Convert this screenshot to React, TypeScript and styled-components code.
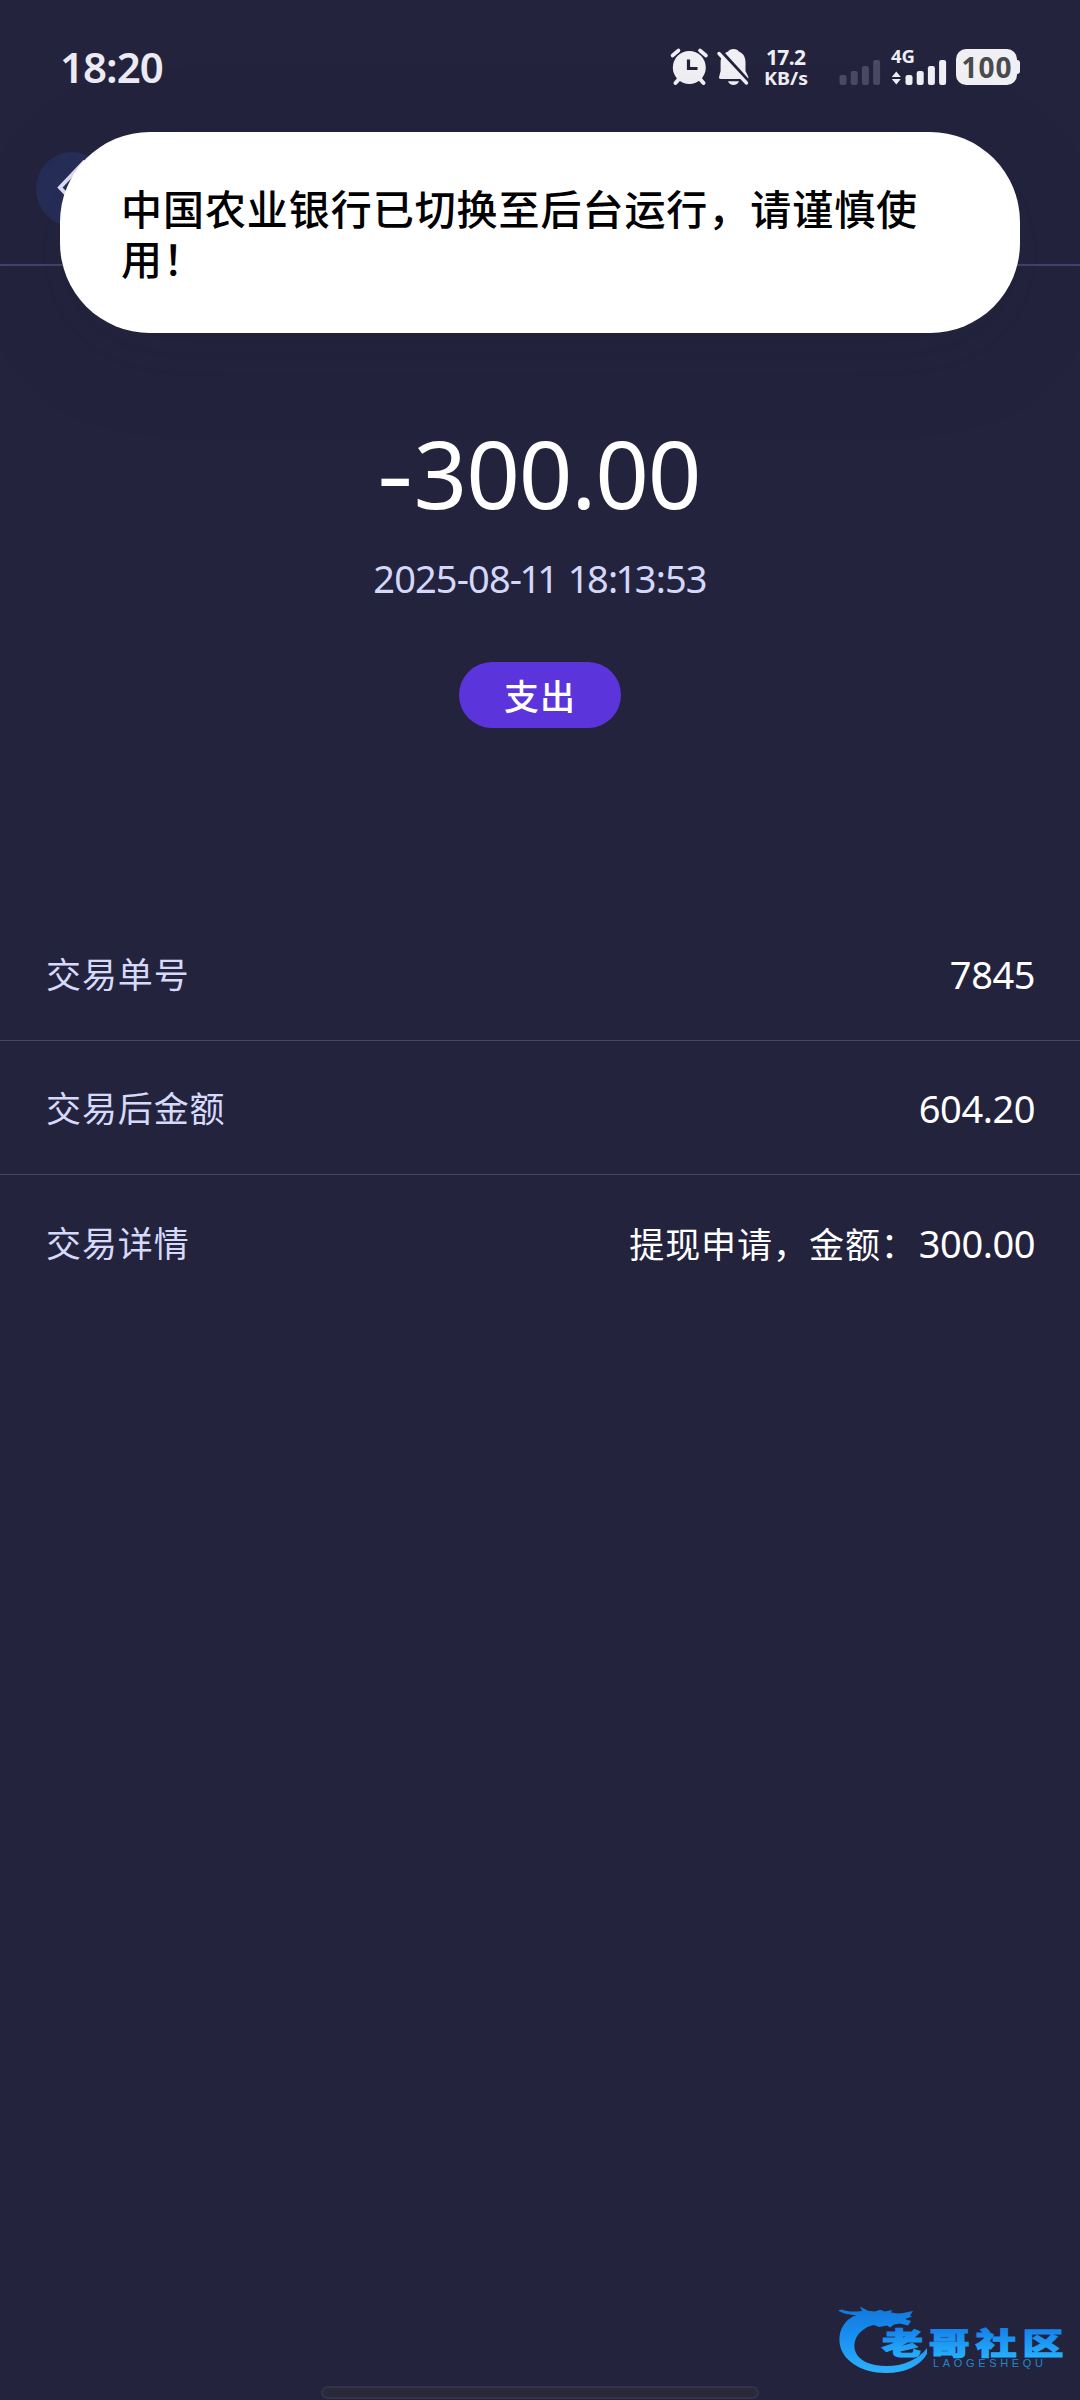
import React from 'react';
import styled, { createGlobalStyle } from 'styled-components';

const Global = createGlobalStyle`
  * { box-sizing: border-box; }
  body {
    margin: 0;
    background: #24233e;
    font-family: 'Noto Sans', 'Noto Sans CJK SC', sans-serif;
  }
`;

const Screen = styled.main`
  position: relative;
  width: 1080px;
  height: 2400px;
  overflow: hidden;
  display: flex;
  flex-direction: column;
  background: #24233e;
  color: #fff;
`;

const StatusBar = styled.header`
  height: 132px;
  padding: 0 60px;
  display: flex;
  align-items: center;
  justify-content: space-between;
`;

const Clock = styled.time`
  padding-top: 2px;
  font-size: 42px;
  line-height: 60px;
  font-weight: 600;
  letter-spacing: -1px;
  color: #ecebf4;
`;

const StatusIcons = styled.svg`
  display: block;
  width: 352px;
  height: 60px;
`;

const NavBar = styled.nav`
  height: 134px;
  padding: 20px 36px;
  border-bottom: 2px solid #45436a;
`;

const BackButton = styled.div`
  width: 72px;
  height: 74px;
  border-radius: 50%;
  background: #262e58;
  display: flex;
  align-items: center;
  justify-content: center;
`;

const Toast = styled.div`
  position: absolute;
  top: 132px;
  left: 60px;
  width: 960px;
  height: 201px;
  padding: 51px 58px 0 61px;
  border-radius: 90px;
  background: #fff;
  color: #000;
  font-family: 'Noto Sans CJK SC', sans-serif;
  font-size: 41px;
  line-height: 49.5px;
  font-weight: 500;
  letter-spacing: 0.95px;
  box-shadow: 0 20px 90px rgba(32, 32, 48, 0.2);
`;

const Summary = styled.section`
  height: 640px;
  padding-top: 143px;
  display: flex;
  flex-direction: column;
  align-items: center;
`;

const Amount = styled.div`
  font-size: 94px;
  line-height: 128px;
  letter-spacing: -1.2px;
`;

const Minus = styled.span`
  display: inline-block;
  margin-right: 5px;
  transform: scaleX(1.2) translateY(-2px);
`;

const Timestamp = styled.div`
  margin-top: 11px;
  font-size: 38px;
  line-height: 60px;
  letter-spacing: -0.9px;
  word-spacing: 4px;
  color: #d3d8fb;
`;

const NarrowDigit = styled.span`
  margin: 0 -1.6px;
`;

const Badge = styled.div`
  margin-top: 54px;
  width: 162px;
  height: 66px;
  padding-bottom: 1px;
  border-radius: 33px;
  background: #5b34dc;
  display: flex;
  align-items: center;
  justify-content: center;
  font-family: 'Noto Sans CJK SC', sans-serif;
  font-size: 35px;
  font-weight: 500;
  letter-spacing: 1px;
`;

const Details = styled.dl`
  margin: 0;
`;

const Row = styled.div<{ $last?: boolean }>`
  height: 134.5px;
  padding: 0 46px;
  display: flex;
  align-items: center;
  justify-content: space-between;
  border-bottom: 1px solid ${(p) => (p.$last ? 'transparent' : '#464765')};
`;

const Label = styled.dt`
  font-family: 'Noto Sans CJK SC', sans-serif;
  font-size: 35px;
  letter-spacing: 0.9px;
  line-height: 60px;
  color: #d5d9fa;
`;

const Value = styled.dd`
  margin: 0 -1px 0 0;
  padding-top: 2px;
  font-size: 38px;
  line-height: 60px;
  letter-spacing: -0.45px;
  color: #fff;
`;

const Note = styled.span`
  margin-right: 2px;
  font-family: 'Noto Sans CJK SC', sans-serif;
  font-size: 35px;
  letter-spacing: 0.95px;
`;

const Footer = styled.footer`
  margin-top: auto;
  display: flex;
  flex-direction: column;
`;

const Brand = styled.svg`
  align-self: flex-end;
  display: block;
  width: 260px;
  height: 100px;
`;

const HomeIndicator = styled.div`
  align-self: center;
  margin: 6px 0 1px;
  width: 438px;
  height: 13px;
  border: 2px solid #34324a;
  border-radius: 7px;
  background: #2a2939;
`;

const rows: { label: string; note?: string; value: string }[] = [
  { label: '交易单号', value: '7845' },
  { label: '交易后金额', value: '604.20' },
  { label: '交易详情', note: '提现申请，金额：', value: '300.00' },
];

const Digits = ({ text }: { text: string }) => (
  <>
    {text.split('').map((c, i) => (c === '1' ? <NarrowDigit key={i}>1</NarrowDigit> : c))}
  </>
);

const Bars = ({ x, fill }: { x: number; fill: string }) => (
  <g fill={fill}>
    {[10, 14, 19, 25].map((h, i) => (
      <rect key={h} x={x + i * 11.2} y={85 - h} width="7" height={h} rx="2.2" />
    ))}
  </g>
);

const Indicators = () => (
  <StatusIcons viewBox="668 36 352 60" fontFamily="'Noto Sans', sans-serif" fontWeight="700">
    <g fill="#efeff4" stroke="#efeff4" strokeLinecap="round">
      <circle cx="689.3" cy="67.500" r="16.5" stroke="none" />
      <path d="M672.500 55.500l6-5M706 55.500l-6-5" strokeWidth="3.6" fill="none" />
      <path d="M679 79l-3.500 4M700 79l3.500 4" strokeWidth="4" fill="none" />
      <path d="M688.500 59.500v9h9" stroke="#24233e" strokeWidth="3.2" fill="none" strokeLinecap="butt" />
    </g>
    <path
      d="M733.500 49c-2.800 0-4.600 1-5.300 2.500-5 1.700-7.600 5.500-7.600 11v8.500l-1.400 5.500c-.6 1.700.2 2.500 1.700 2.500h25.600c1.500 0 2.300-.8 1.700-2.500l-2.700-5.500v-8.500c0-5.500-2.300-9.300-6.700-11-.7-1.500-2.500-2.500-5.300-2.500z"
      fill="#efeff4"
    />
    <path d="M728 81.200h11c-1 2.600-3 3.800-5.500 3.800s-4.500-1.200-5.500-3.800z" fill="#efeff4" />
    <path d="M721.500 52l26 28.500" stroke="#24233e" strokeWidth="4" />
    <path d="M719 53.500l27.500 29.500" stroke="#efeff4" strokeWidth="3.4" strokeLinecap="round" />
    <text x="766" y="65" fontSize="21" textLength="40" fill="#efeff4">17.2</text>
    <text x="764" y="84.500" fontSize="18.500" textLength="44" lengthAdjust="spacingAndGlyphs" fill="#efeff4">KB/s</text>
    <Bars x={839.5} fill="#4b4a65" />
    <Bars x={905.5} fill="#efeff4" />
    <text x="891" y="63" fontSize="18" textLength="24" lengthAdjust="spacingAndGlyphs" fill="#efeff4">4G</text>
    <path d="M896.300 71.500l4.500 5.500h-9zM896.300 84.500l4.500-5.500h-9z" fill="#efeff4" />
    <rect x="956" y="49" width="61" height="36" rx="10" fill="#efeff4" />
    <rect x="1012" y="60" width="8" height="14" rx="3" fill="#efeff4" />
    <text x="961.500" y="77.500" fontSize="28" textLength="50" fill="#4a4a4c" fontWeight="700">100</text>
  </StatusIcons>
);

const BrandMark = () => (
  <Brand viewBox="0 0 260 100">
    <defs>
      <linearGradient id="dragon" gradientUnits="userSpaceOnUse" x1="0" y1="26" x2="0" y2="92">
        <stop offset="0" stopColor="#1476d8" />
        <stop offset="0.4" stopColor="#168cf0" />
        <stop offset="1" stopColor="#2bb0fb" />
      </linearGradient>
      <linearGradient id="name" gradientUnits="userSpaceOnUse" x1="0" y1="-27" x2="0" y2="3">
        <stop offset="0" stopColor="#1580ea" />
        <stop offset="1" stopColor="#25aefb" />
      </linearGradient>
    </defs>
    <path
      d="M22 29.500c6 2.500 12 2.300 20 1.500l-2-4.500 8 4.200 7 .8 5-1.800 5 1.800 7-1.600-1 2.600 7 1 5-.5 10-2-3 4.500 2 1-7 2.500 6 2-3 4.500-8-2-6 1-4 3-3-2-8 1.500-5-2c-8 1-17 8-19 16-3 12 5 21 20 24 20 4 42-3 52-17v6c-7 12-22 19-41 19-25 0-45-13-46.500-31-1-13 6-23 17-27-7 0-14-1.500-18.500-4.500z"
      fill="url(#dragon)"
    />
    <text
      transform="translate(62 73.500) scale(1.32 0.950)"
      fontFamily="'Noto Sans CJK SC', sans-serif"
      fontSize="31"
      fontWeight="900"
      letterSpacing="4.500"
      fill="url(#name)"
      stroke="url(#name)"
      strokeWidth="1.200"
    >
      老哥社区
    </text>
    <text
      x="113"
      y="87"
      fontFamily="'Liberation Sans', sans-serif"
      fontSize="11"
      textLength="110"
      fill="#2391d8"
      opacity="0.900"
    >
      LAOGESHEQU
    </text>
  </Brand>
);

export default function App() {
  return (
    <Screen>
      <Global />
      <StatusBar>
        <Clock>18:20</Clock>
        <Indicators />
      </StatusBar>
      <NavBar>
        <BackButton>
          <svg width="36" height="60" viewBox="0 0 36 60" fill="none">
            <path d="M31 2L6 28.500 31 55" stroke="#e6e6fa" strokeWidth="4" />
          </svg>
        </BackButton>
      </NavBar>
      <Summary>
        <Amount>
          <Minus>-</Minus>300.00
        </Amount>
        <Timestamp>
          <Digits text="2025-08-11 18:13:53" />
        </Timestamp>
        <Badge>支出</Badge>
      </Summary>
      <Details>
        {rows.map((r, i) => (
          <Row key={r.label} $last={i === rows.length - 1}>
            <Label>{r.label}</Label>
            <Value>
              {r.note && <Note>{r.note}</Note>}
              {r.value}
            </Value>
          </Row>
        ))}
      </Details>
      <Footer>
        <BrandMark />
        <HomeIndicator />
      </Footer>
      <Toast>中国农业银行已切换至后台运行，请谨慎使用！</Toast>
    </Screen>
  );
}
